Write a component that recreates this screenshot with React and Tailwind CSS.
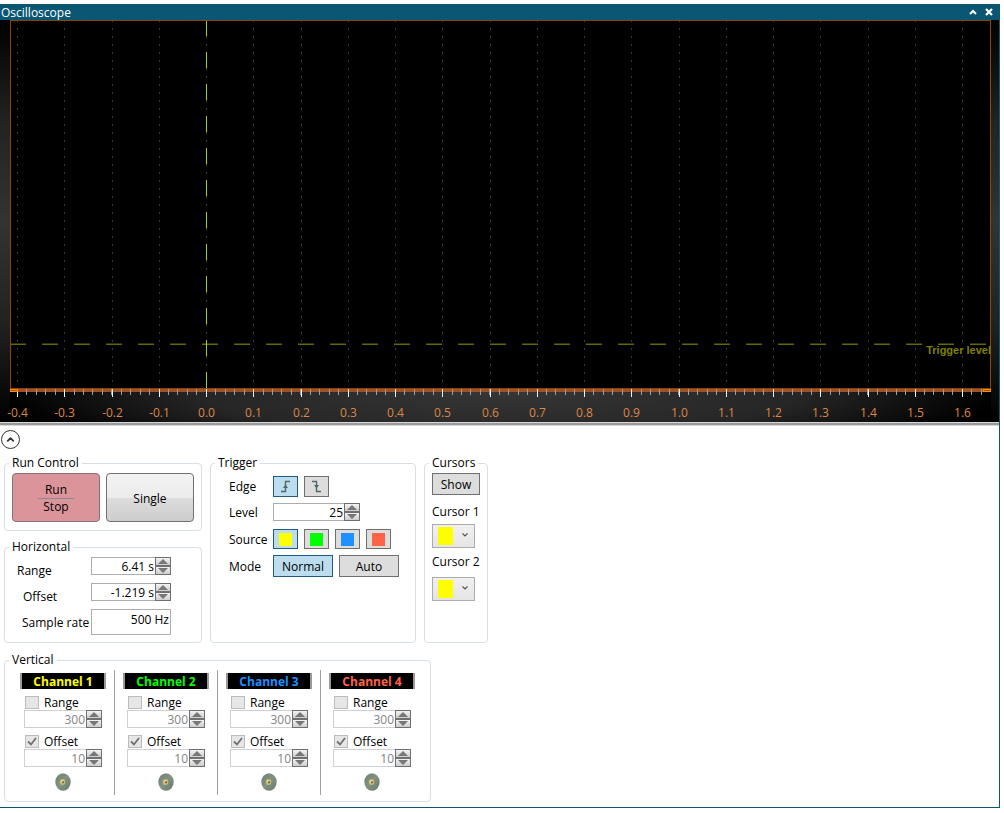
import { ChevronUp } from "lucide-react";

const TICKS = Array.from({ length: 21 }, (_, i) => i - 4);
const MINOR = Array.from({ length: 103 }, (_, i) => i - 20);
const xAt = (v) => Math.round(206 + v * 47.25);

function Scope() {
  return (
    <svg viewBox="0 0 999 402" className="block h-auto w-full" role="img" aria-label="Oscilloscope trace">
      <defs>
        <linearGradient id="bezel" gradientUnits="userSpaceOnUse" x1="0" y1="0" x2="0" y2="402">
          <stop offset="0" stopColor="#000000" />
          <stop offset="0.25" stopColor="#222222" />
          <stop offset="0.5" stopColor="#333333" />
          <stop offset="0.75" stopColor="#222222" />
          <stop offset="1" stopColor="#000000" />
        </linearGradient>
        <radialGradient id="foot" gradientUnits="userSpaceOnUse" cx="0" cy="0" r="1" gradientTransform="translate(500 371) scale(500 75)">
          <stop offset="0" stopColor="#363636" />
          <stop offset="0.6" stopColor="#262626" />
          <stop offset="1" stopColor="#000000" />
        </radialGradient>
      </defs>
      <rect width="999" height="402" fill="url(#bezel)" />
      <rect x="10" y="371" width="981" height="31" fill="url(#foot)" />
      <rect x="10" y="0" width="981" height="370" fill="#000" />
      <g shapeRendering="crispEdges">
        {TICKS.map((t) => (
          <line key={t} x1={xAt(t) + 0.5} x2={xAt(t) + 0.5} y1="0" y2="369" stroke="#3a3a3a" strokeDasharray="2 6" />
        ))}
        <line x1="10" x2="990" y1="323.5" y2="323.5" stroke="#333300" strokeDasharray="16 16" />
        <line x1="10" x2="990" y1="324.5" y2="324.5" stroke="#666600" strokeDasharray="16 16" />
        <line x1="206.5" x2="206.5" y1="0" y2="369" stroke="#9acd32" strokeDasharray="16 16" />
        <path d="M10.5 371V.5H990.5V371" fill="none" stroke="#8b4500" />
        <rect x="10" y="368" width="981" height="1" fill="#8b4500" />
        <rect x="10" y="369" width="981" height="3" fill="#a0522d" />
        {MINOR.map((m) => (
          <rect key={m} x={Math.floor(206.3 + m * 9.45)} y="369" width="1" height="6" fill="#a89a94" />
        ))}
        {TICKS.map((t) => (
          <rect key={t} x={xAt(t)} y="369" width="1" height="8" fill="#f5f5f5" />
        ))}
        <rect x="10.5" y="369.5" width="7" height="2" fill="none" stroke="#ff8c00" />
        <rect x="983.5" y="369.5" width="7" height="2" fill="none" stroke="#ff8c00" />
      </g>
      <g fill="#dc8745" fontSize="12" textAnchor="middle" fontFamily="'Open Sans', sans-serif">
        {TICKS.map((t) => (
          <text key={t} x={xAt(t) + 0.5} y="397">{(t / 10).toFixed(1)}</text>
        ))}
      </g>
      <text x="991" y="334" textAnchor="end" fill="#808000" fontSize="11" fontWeight="700" fontFamily="'Liberation Sans', sans-serif">
        Trigger level
      </text>
    </svg>
  );
}

function Group({ title, className = "", children }) {
  return (
    <fieldset className={`min-w-0 rounded border border-[#d5dfe5] ${className}`}>
      <legend className="ml-1 h-4 px-[3px] leading-4">{title}</legend>
      {children}
    </fieldset>
  );
}

function Spinner({ label, value, width = "w-20", id, disabled = false }) {
  const btn = "flex h-[9px] w-4 items-center justify-center border border-[#707070] bg-linear-to-b from-[#f3f3f3] to-[#cdcdcd]";
  return (
    <div className={`flex h-[18px] ${width}`}>
      <input
        id={id}
        aria-label={label}
        defaultValue={value}
        disabled={disabled}
        className={`h-[18px] min-w-0 flex-1 border border-r-0 bg-white pr-px text-right ${disabled ? "border-[#cfd0d4] text-[#838383]" : "border-[#abadb3]"}`}
      />
      <div className="flex flex-col">
        <button type="button" aria-label={`Increase ${label}`} className={btn}>
          <svg viewBox="0 0 10 5" className="h-[5px] w-[10px]"><path d="M0 5 5 0l5 5z" fill="#777" /></svg>
        </button>
        <button type="button" aria-label={`Decrease ${label}`} className={btn}>
          <svg viewBox="0 0 10 5" className="h-[5px] w-[10px]"><path d="M0 0 5 5l5-5z" fill="#777" /></svg>
        </button>
      </div>
    </div>
  );
}

function Toggle({ on = false, className = "", label, children }) {
  return (
    <button
      type="button"
      aria-label={label}
      aria-pressed={on}
      className={`flex items-center justify-center border ${on ? "border-[#245a83] bg-[#bcddee]" : "border-[#707070] bg-[#dddddd]"} ${className}`}
    >
      {children}
    </button>
  );
}

function EdgeIcon({ falling = false }) {
  return (
    <svg viewBox="0 0 13 13" className="h-[13px] w-[13px]" fill="none" stroke="#4c6a68">
      {falling ? (
        <>
          <path d="M2 1.5H6.500V11.500H11" strokeWidth="1.4" />
          <path d="M4 5h5L6.500 8.500z" fill="#4c6a68" stroke="none" />
        </>
      ) : (
        <>
          <path d="M2 11.500H6.500V1.500H11" strokeWidth="1.4" />
          <path d="M4 8h5L6.500 4.500z" fill="#4c6a68" stroke="none" />
        </>
      )}
    </svg>
  );
}

const SOURCES = [
  { name: "Channel 1", swatch: "bg-[#ffff00]", text: "text-[#ffff00]" },
  { name: "Channel 2", swatch: "bg-[#00ff00]", text: "text-[#00ff00]" },
  { name: "Channel 3", swatch: "bg-[#1e90ff]", text: "text-[#1e90ff]" },
  { name: "Channel 4", swatch: "bg-[#ff6347]", text: "text-[#ff6347]" },
];

function CursorPicker({ label }) {
  return (
    <button
      type="button"
      aria-label={`${label} colour`}
      aria-haspopup="listbox"
      className="flex h-6 w-[43px] items-center justify-between border border-[#acacac] bg-linear-to-b from-[#f0f0f0] to-[#e5e5e5] pr-1.5 pl-[5px]"
    >
      <span className="h-[18px] w-[15px] bg-[#ffff00]" />
      <svg viewBox="0 0 6 4" className="mb-[2px] h-1 w-1.5"><path d="M.5.5 3 3 5.500.5" fill="none" stroke="#555" strokeWidth="1.2" /></svg>
    </button>
  );
}

function Check({ id, label, checked = false }) {
  return (
    <div className="flex h-4 items-center gap-[5px]">
      <span className="grid">
        <input
          id={id}
          type="checkbox"
          disabled
          defaultChecked={checked}
          className="col-start-1 row-start-1 h-[13px] w-[14px] appearance-none border border-[#bcbcbc] bg-[#e6e6e6]"
        />
        {checked && (
          <svg viewBox="0 0 14 13" className="pointer-events-none col-start-1 row-start-1 h-[13px] w-[14px]">
            <path d="M3 6.500 6 9.500 11 3" fill="none" stroke="#707070" strokeWidth="1.8" />
          </svg>
        )}
      </span>
      <label htmlFor={id} className="pt-[2px]">{label}</label>
    </div>
  );
}

function Connector({ id }) {
  return (
    <svg viewBox="0 0 16 18" className="mx-auto mt-[6px] h-[18px] w-4">
      <defs>
        <linearGradient id={id} x1="0" y1="0" x2="1" y2="1">
          <stop offset="0" stopColor="#6f8272" />
          <stop offset="0.5" stopColor="#829181" />
          <stop offset="1" stopColor="#66786a" />
        </linearGradient>
      </defs>
      <ellipse cx="8" cy="9" rx="7.700" ry="8.800" fill={`url(#${id})`} />
      <ellipse cx="7.500" cy="9" rx="2.800" ry="3" fill="#c9b878" />
      <circle cx="7.300" cy="8.500" r="1.300" fill="#eadfae" />
      <circle cx="8" cy="9.300" r="1" fill="#66592f" />
    </svg>
  );
}

function Channel({ source, index }) {
  return (
    <div className={`w-[103px] px-3 pb-1 ${index < 3 ? "border-r border-[#a0a0a0]" : "pr-[13px]"}`}>
      <div className={`mt-[3px] -ml-1 h-4 w-[86px] border-x-2 border-[#9a9a9a] bg-black pt-px text-center leading-4 font-bold ${source.text}`}>
        {source.name}
      </div>
      <div className="mt-[5px] ml-px"><Check id={`range-${index}`} label="Range" /></div>
      <Spinner label={`${source.name} range`} value="300" width="w-[78px]" disabled />
      <div className="mt-[5px] ml-px"><Check id={`offset-${index}`} label="Offset" checked /></div>
      <Spinner label={`${source.name} offset`} value="10" width="w-[78px]" disabled />
      <Connector id={`jack-${index}`} />
    </div>
  );
}

export default function App() {
  return (
    <div className="min-h-screen bg-white pt-1 pr-1 font-['Open_Sans',sans-serif] text-[12px] leading-4 text-black">
      <main className="border-r border-b border-[#0b5672] pb-[5px]">
        <header className="-mr-px flex h-4 items-center justify-between bg-[#0b5672] pr-[7px] pl-px text-white">
          <h1 className="pt-[2px]">Oscilloscope</h1>
          <div className="flex items-center gap-2">
            <button type="button" aria-label="Collapse">
              <svg viewBox="0 0 8 8" className="h-2 w-2"><path d="M1 6 4 3l3 3" fill="none" stroke="#fff" strokeWidth="2" /></svg>
            </button>
            <button type="button" aria-label="Close">
              <svg viewBox="0 0 8 8" className="h-2 w-2"><path d="m1 1 6 6M7 1 1 7" stroke="#fff" strokeWidth="2.2" /></svg>
            </button>
          </div>
        </header>
        <Scope />
        <div className="h-1 border-y border-[#d8d8d8] bg-[#999999]" />
        <button type="button" aria-label="Hide controls" className="mt-1 ml-px flex h-[19px] w-[19px] items-center justify-center rounded-full border border-[#333] text-[#333]">
          <ChevronUp size={11} strokeWidth={4} />
        </button>

        <div className="mt-[6px] ml-1 flex gap-2">
          <div className="flex w-[198px] flex-col gap-2">
            <Group title="Run Control" className="h-[76px]">
              <div className="mt-[2px] ml-[7px] flex gap-[6px]">
                <button type="button" className="flex h-[49px] w-[88px] flex-col items-center justify-center rounded-sm border border-[#8a7175] bg-[#db9499] pt-[2px]">
                  <span>Run</span>
                  <span className="h-px w-9 bg-[#85899b]" />
                  <span>Stop</span>
                </button>
                <button type="button" className="h-[49px] w-[88px] rounded-sm border border-[#707070] bg-[linear-gradient(#f3f3f3,#ebebeb_50%,#dddddd_50%,#cdcdcd)] pt-[2px]">
                  Single
                </button>
              </div>
            </Group>
            <Group title="Horizontal" className="h-[104px]">
              <div className="mt-[2px] ml-3 flex flex-col gap-2">
                <div className="flex h-[18px]">
                  <label htmlFor="h-range" className="w-[74px] pt-[6px]">Range</label>
                  <Spinner id="h-range" label="Range" value="6.41 s" />
                </div>
                <div className="flex h-[18px]">
                  <label htmlFor="h-offset" className="w-[74px] pt-[6px] pl-[6px]">Offset</label>
                  <Spinner id="h-offset" label="Offset" value="-1.219 s" />
                </div>
                <div className="flex h-[26px]">
                  <label htmlFor="h-rate" className="w-[74px] pt-[6px] pl-[5px] whitespace-nowrap">Sample rate</label>
                  <input id="h-rate" readOnly value="500 Hz" className="h-[26px] w-20 border border-[#abadb3] pr-px pb-[6px] text-right" />
                </div>
              </div>
            </Group>
          </div>

          <Group title="Trigger" className="w-[206px]">
            <div className="mt-[5px] ml-[18px] grid grid-cols-[44px_1fr] items-center">
              <span className="pt-px">Edge</span>
              <div className="flex gap-[6px]">
                <Toggle on label="Rising edge" className="h-[21px] w-[25px]"><EdgeIcon /></Toggle>
                <Toggle label="Falling edge" className="h-[21px] w-[25px]"><EdgeIcon falling /></Toggle>
              </div>
              <label htmlFor="level" className="mt-2">Level</label>
              <div className="mt-[6px]"><Spinner id="level" label="Level" value="25" width="w-[87px]" /></div>
              <span className="mt-2 pt-[2px]">Source</span>
              <div className="mt-2 flex gap-[6px]">
                {SOURCES.map((s, i) => (
                  <Toggle key={s.name} on={i === 0} label={s.name} className="h-5 w-[25px]">
                    <span className={`h-[13px] w-[13px] ${s.swatch}`} />
                  </Toggle>
                ))}
              </div>
              <span className="mt-[6px] pt-[2px]">Mode</span>
              <div className="mt-[6px] flex gap-[6px]">
                <Toggle on className="h-[22px] w-[60px] pt-[2px]">Normal</Toggle>
                <Toggle className="h-[22px] w-[60px] pt-[2px]">Auto</Toggle>
              </div>
            </div>
          </Group>

          <Group title="Cursors" className="w-16">
            <div className="mt-[2px] ml-[7px]">
              <Toggle className="h-[22px] w-12 pt-[2px]">Show</Toggle>
              <p className="mt-[9px] whitespace-nowrap">Cursor 1</p>
              <div className="mt-1"><CursorPicker label="Cursor 1" /></div>
              <p className="mt-[6px] whitespace-nowrap">Cursor 2</p>
              <div className="mt-[7px]"><CursorPicker label="Cursor 2" /></div>
            </div>
          </Group>
        </div>

        <Group title="Vertical" className="mt-[9px] ml-1 w-[427px]">
          <div className="mt-[2px] mb-[6px] ml-[7px] flex">
            {SOURCES.map((s, i) => (
              <Channel key={s.name} source={s} index={i} />
            ))}
          </div>
        </Group>
      </main>
    </div>
  );
}
